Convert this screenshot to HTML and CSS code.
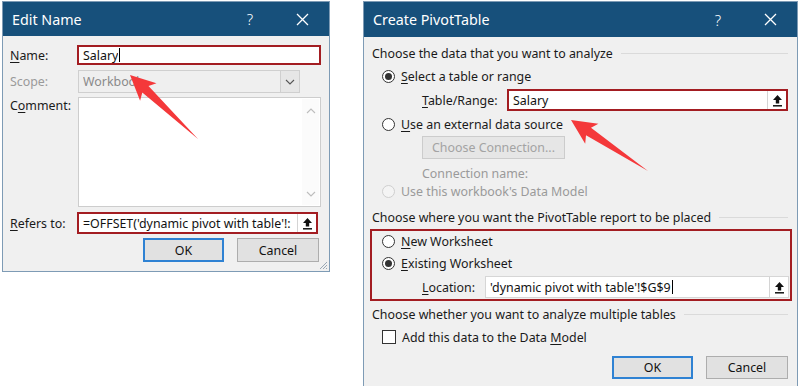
FILE: index.html
```html
<!DOCTYPE html>
<html>
<head>
<meta charset="utf-8">
<title>Edit Name / Create PivotTable</title>
<link rel="stylesheet" href="styles.css">
</head>
<body>
<div class="stage">
  <section class="dlg dlg-name">
    <header class="title">
      <span class="ttext">Edit Name</span>
      <span class="help">?</span>
      <span class="close"><svg width="13" height="13" viewBox="0 0 13 13"><path d="M1 1L12 12M12 1L1 12" stroke="#fff" stroke-width="1.3" fill="none"/></svg></span>
    </header>
    <div class="body">
      <div class="row r-name">
        <label class="lbl"><u>N</u>ame:</label>
        <div class="field red w-name"><span class="val">Salary</span><span class="caret"></span></div>
      </div>
      <div class="row r-scope">
        <label class="lbl dis">Scope:</label>
        <div class="select">
          <span class="val">Workbook</span>
          <span class="dd"><svg width="10" height="6" viewBox="0 0 10 6"><path d="M1 1L5 5L9 1" stroke="#555" stroke-width="1.1" fill="none"/></svg></span>
        </div>
      </div>
      <div class="row r-comment">
        <label class="lbl top">C<u>o</u>mment:</label>
        <div class="textarea">
          <div class="sb">
            <svg width="10" height="6" viewBox="0 0 10 6"><path d="M1 5L5 1L9 5" stroke="#bdbdbd" stroke-width="1.1" fill="none"/></svg>
            <svg width="10" height="6" viewBox="0 0 10 6"><path d="M1 1L5 5L9 1" stroke="#bdbdbd" stroke-width="1.1" fill="none"/></svg>
          </div>
        </div>
      </div>
      <div class="row r-refers">
        <label class="lbl"><u>R</u>efers to:</label>
        <div class="field red w-refers">
          <span class="val clip">=OFFSET('dynamic pivot with table'!:</span>
          <span class="pick"><svg width="11" height="13" viewBox="0 0 11 13"><path d="M5.5 1L1 6H3.8V9.5H7.2V6H10Z" fill="#111"/><path d="M1 11.8H10" stroke="#111" stroke-width="1.5"/></svg></span>
        </div>
      </div>
      <div class="btns b-name">
        <button class="btn def">OK</button>
        <button class="btn">Cancel</button>
      </div>
    </div>
    <svg class="grip" width="9" height="9" viewBox="0 0 9 9"><path d="M8 1L1 8M8 4L4 8M8 7L7 8" stroke="#9aa8b5" stroke-width="1" fill="none"/></svg>
  </section>

  <section class="dlg dlg-pivot">
    <header class="title tall">
      <span class="ttext">Create PivotTable</span>
      <span class="help">?</span>
      <span class="close"><svg width="13" height="13" viewBox="0 0 13 13"><path d="M1 1L12 12M12 1L1 12" stroke="#fff" stroke-width="1.3" fill="none"/></svg></span>
    </header>
    <div class="body pbody">
      <div class="sect s1">Choose the data that you want to analyze</div>
      <div class="opt o1"><span class="radio on"></span><span><u>S</u>elect a table or range</span></div>
      <div class="sub t1">
        <label class="sublbl w85"><u>T</u>able/Range:</label>
        <div class="field red grow"><span class="val clip">Salary</span><span class="pick"><svg width="11" height="13" viewBox="0 0 11 13"><path d="M5.5 1L1 6H3.8V9.5H7.2V6H10Z" fill="#111"/><path d="M1 11.8H10" stroke="#111" stroke-width="1.5"/></svg></span></div>
      </div>
      <div class="opt o2"><span class="radio"></span><span><u>U</u>se an external data source</span></div>
      <div class="sub c1"><button class="btn dbtn">Choose Connection...</button></div>
      <div class="sub dis c2">Connection name:</div>
      <div class="opt dis o3"><span class="radio off"></span><span>Use this workbook's Data Model</span></div>
      <div class="sect s2">Choose where you want the PivotTable report to be placed</div>
      <div class="redbox">
        <div class="opt o4"><span class="radio"></span><span><u>N</u>ew Worksheet</span></div>
        <div class="opt o5"><span class="radio on"></span><span><u>E</u>xisting Worksheet</span></div>
        <div class="sub t2">
          <label class="sublbl w63"><u>L</u>ocation:</label>
          <div class="field plain grow"><span class="val">'dynamic pivot with table'!$G$9</span><span class="caret"></span><span class="spacer"></span><span class="pick"><svg width="11" height="13" viewBox="0 0 11 13"><path d="M5.5 1L1 6H3.8V9.5H7.2V6H10Z" fill="#111"/><path d="M1 11.8H10" stroke="#111" stroke-width="1.5"/></svg></span></div>
        </div>
      </div>
      <div class="sect s3">Choose whether you want to analyze multiple tables</div>
      <div class="opt o6"><span class="check"></span><span>Add this data to the Data <u>M</u>odel</span></div>
      <div class="btns b-pivot">
        <button class="btn def">OK</button>
        <button class="btn">Cancel</button>
      </div>
    </div>
    <svg class="grip" width="9" height="9" viewBox="0 0 9 9"><path d="M8 1L1 8M8 4L4 8M8 7L7 8" stroke="#9aa8b5" stroke-width="1" fill="none"/></svg>
  </section>
</div>

<svg class="arrows" width="800" height="386" viewBox="0 0 800 386">
  <polygon points="130,75 156.5,83.2 148.5,86 198,139 142.3,92.6 140.1,100.8" fill="#f4383a"/>
  <polygon points="571,120 598.4,123.8 591,127.8 648,171 586,135.3 585.2,143.8" fill="#f4383a"/>
</svg>
</body>
</html>
```

FILE: styles.css
```css
* { box-sizing: border-box; margin: 0; padding: 0; }
html, body { width: 800px; height: 386px; overflow: hidden; background: #fff; }
body {
  font-family: "Noto Sans", "Liberation Sans", sans-serif;
  font-size: 12.4px;
  color: #1a1a1a;
  position: relative;
}
u { text-decoration: underline; text-underline-offset: 2px; }

.stage { display: flex; align-items: flex-start; gap: 33px; padding: 1px 0 0 2px; }

.dlg {
  background: #f0f0f0;
  border: 1px solid #7e9bb5;
  position: relative;
  display: flex;
  flex-direction: column;
}
.dlg-name { width: 328px; height: 271px; }
.dlg-pivot { width: 435px; height: 400px; }

.title {
  background: #17507b;
  color: #fff;
  height: 34px;
  display: flex;
  align-items: center;
  padding-left: 9px;
  font-size: 14.3px;
  flex: none;
}
.title.tall { height: 35px; }
.ttext { flex: 1; }
.help { width: 20px; text-align: center; margin-right: 32px; font-size: 15px; font-weight: 300; }
.close { width: 20px; margin-right: 17px; display: flex; justify-content: center; }

.body { display: flex; flex-direction: column; padding: 0 0 0 7px; }

.row { display: flex; align-items: center; }
.lbl { width: 67px; flex: none; }
.lbl.top { align-self: flex-start; }
.dis { color: #9a9a9a; }

.r-name { margin-top: 9px; height: 20px; }
.r-scope { margin-top: 5px; height: 23px; }
.r-comment { margin-top: 4px; height: 110px; align-items: stretch; }
.r-refers { margin-top: 5px; height: 22px; }

.field {
  display: flex;
  align-items: center;
  height: 100%;
  background: #fff;
  padding-left: 4px;
}
.field.red { border: 2px solid #a31d22; }
.field.plain { border: 1px solid #d6d6d6; padding-left: 4px; }
.w-name { width: 244px; }
.w-refers { width: 241px; }
.grow { flex: 1; }
.val { white-space: nowrap; overflow: hidden; color: #111; flex: none; }
.val.clip { flex: 1; min-width: 0; }
.caret { width: 1px; height: 14px; background: #000; margin-left: 1px; flex: none; }
.spacer { flex: 1; }
.pick {
  width: 19px;
  height: 100%;
  flex: none;
  border-left: 1px solid #d4d4d4;
  display: flex;
  align-items: center;
  justify-content: center;
  background: #fff;
}

.select {
  width: 222px;
  height: 100%;
  margin-left: 1px;
  border: 1px solid #cfcfcf;
  background: #efefef;
  display: flex;
  align-items: center;
  padding-left: 4px;
}
.select .val { flex: 1; color: #8a8a8a; }
.dd {
  width: 19px;
  height: 100%;
  border-left: 1px solid #cfcfcf;
  background: #e6e6e6;
  display: flex;
  align-items: center;
  justify-content: center;
}

.textarea {
  width: 243px;
  margin-left: 1px;
  background: #fff;
  border: 1px solid #cdcdcd;
  display: flex;
  justify-content: flex-end;
}
.sb {
  width: 17px;
  display: flex;
  flex-direction: column;
  justify-content: space-between;
  align-items: center;
  padding: 9px 0 8px;
  margin: 1px 1px 1px 0;
  background: #fbfbfb;
}

.btns { display: flex; gap: 13px; }
.b-name { margin-top: 4px; height: 24px; padding-left: 133px; }
.btn {
  font-family: inherit;
  font-size: 12.4px;
  color: #111;
  background: #e1e1e1;
  border: 1px solid #adadad;
  width: 82px;
  height: 100%;
}
.btn.def { border: 2px solid #2f82d3; width: 81px; }

.grip { position: absolute; right: 1px; bottom: 1px; }

/* pivot dialog */
.pbody { padding: 0 9px 0 8px; }
.sect { display: flex; align-items: center; height: 18px; gap: 8px; white-space: nowrap; }
.sect::after { content: ""; flex: 1; border-top: 1px solid #dadada; }
.opt { display: flex; align-items: center; height: 18px; padding-left: 10px; gap: 6px; }
.sub { display: flex; align-items: center; padding-left: 50px; }
.sublbl { flex: none; }
.w85 { width: 85px; }
.w63 { width: 63px; }

.radio {
  width: 13px; height: 13px; border-radius: 50%;
  border: 1px solid #333; background: #fff; flex: none;
  display: flex; align-items: center; justify-content: center;
}
.radio.on::after { content: ""; width: 7px; height: 7px; border-radius: 50%; background: #333; }
.radio.off { border-color: #cfcfcf; background: #f4f4f4; }
.check { width: 14px; height: 14px; border: 1px solid #333; background: #fff; flex: none; }

.s1 { margin-top: 7px; }
.o1 { margin-top: 5px; }
.t1 { margin-top: 4px; height: 22px; }
.o2 { margin-top: 4px; }
.c1 { margin-top: 3px; height: 23px; }
.dbtn { width: 143px; color: #a3a3a3; background: #e6e6e6; border-color: #cccccc; }
.c2 { margin-top: 5px; height: 18px; }
.o3 { margin-top: 0; }
.s2 { margin-top: 8px; }
.redbox {
  margin: 3px -4px 0 -2px;
  border: 2px solid #a31d22;
  display: flex;
  flex-direction: column;
  padding: 1px 1px 1px 0;
}
.o4 { margin-top: 0; }
.o5 { margin-top: 4px; }
.t2 { margin-top: 4px; height: 22px; }
.s3 { margin-top: 4px; }
.o6 { margin-top: 5px; }
.b-pivot { margin-top: 10px; height: 23px; padding-left: 240px; }

.arrows { position: absolute; left: 0; top: 0; pointer-events: none; }
```
